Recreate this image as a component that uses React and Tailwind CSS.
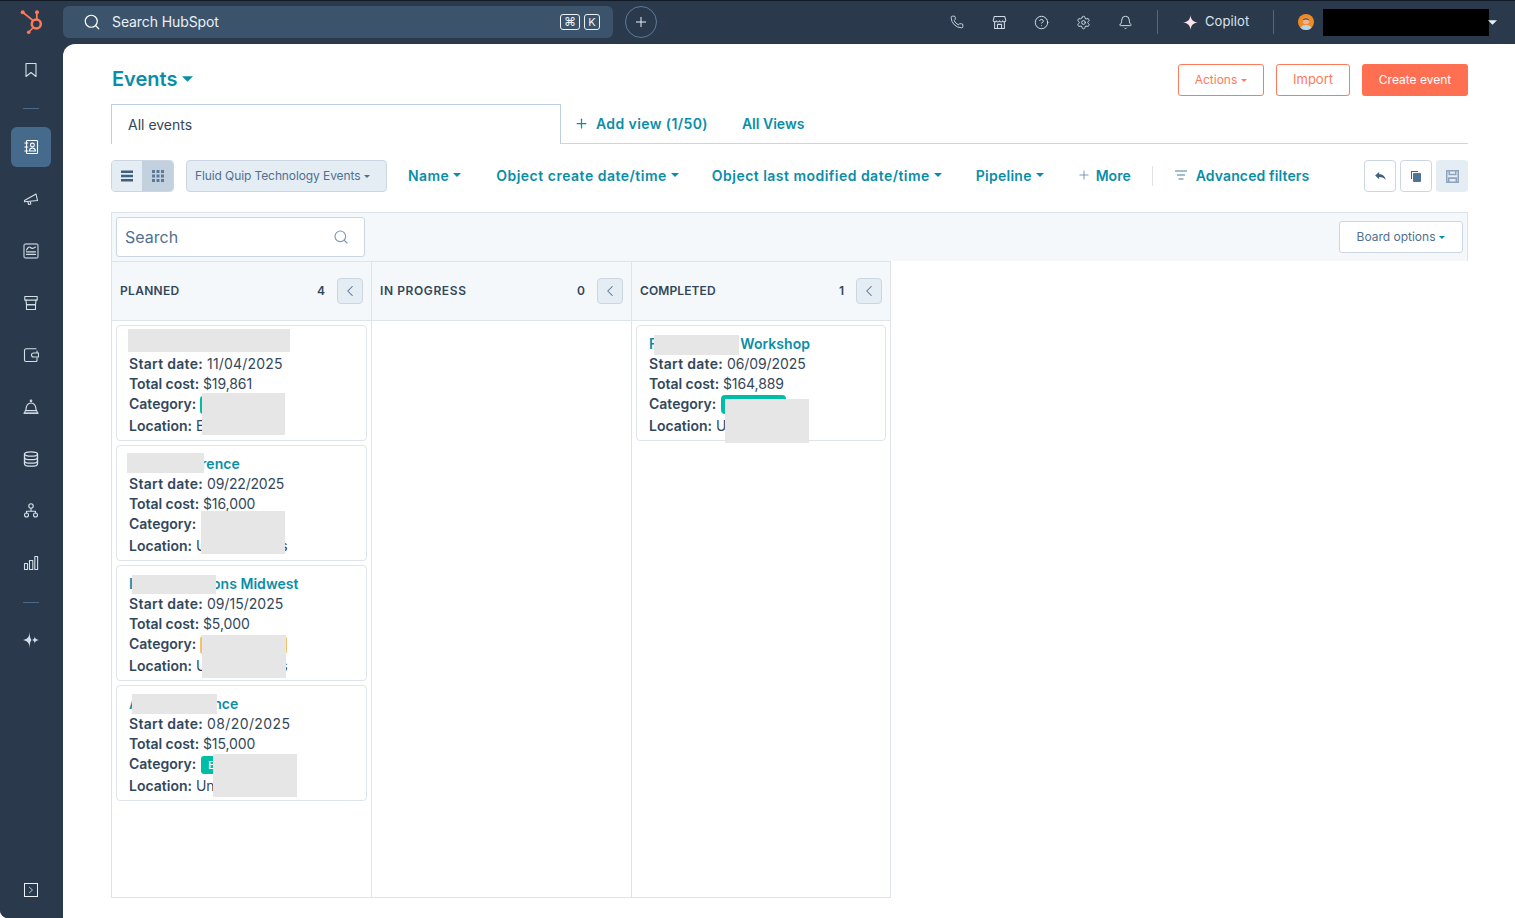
import React from "react";
import { Search, Plus, Phone, CircleHelp, Settings, Bell, ChevronLeft } from "lucide-react";

const Caret = ({ className = "" }) => (
  <svg viewBox="0 0 8 4" className={className} fill="currentColor"><path d="M0 0h8L4 4z" /></svg>
);

const S = ({ children, size = 16, className = "" }) => (
  <svg viewBox="0 0 16 16" width={size} height={size} fill="none" stroke="currentColor" strokeWidth="1.1" strokeLinejoin="round" strokeLinecap="round" className={className}>{children}</svg>
);

const Logo = () => (
  <svg viewBox="0 0 26 26" width="26" height="26" fill="none" stroke="#ff7a59" className="block">
    <circle cx="16.300" cy="15" r="4.500" strokeWidth="2.500" />
    <path d="M16.800 10V4" strokeWidth="1.800" />
    <path d="M13 11.500 3 3.500" strokeWidth="1.700" />
    <path d="M13 18.800 8.700 23.300" strokeWidth="1.600" />
    <circle cx="17" cy="3.300" r="2" fill="#ff7a59" stroke="none" />
    <circle cx="2.700" cy="3.300" r="2" fill="#ff7a59" stroke="none" />
    <circle cx="8.700" cy="23.300" r="1.800" fill="#ff7a59" stroke="none" />
  </svg>
);

const Contacts = () => (
  <S><rect x="3.500" y="1.500" width="11" height="13" rx="0.800" /><circle cx="9.400" cy="6" r="1.900" /><path d="M6.300 12c.2-2 1.400-3 3.100-3s2.900 1 3.100 3z" /><path d="M1.800 4h3M1.800 8h3M1.800 12h3" /></S>
);
const Megaphone = () => (
  <S><path d="M1.500 9.500 13 3l1.500 6.500-13 1.300z" /><path d="M5 11l.6 2.500 2.200-.5-.4-2.200" /></S>
);
const News = () => (
  <S><rect x="1" y="1" width="14" height="14" rx="1.800" strokeWidth="1.400" opacity="0.75" /><path d="M3.500 7c1.500-3 3-3.600 4-2.500 1 1 3 1 5-.5" /><path d="M3.500 8.800h9M3.500 11.300h9" strokeWidth="1.300" /></S>
);
const Store = () => (
  <S><path d="M1.800 1.500h12.400v3.600H1.800z" /><path d="M3 5.100 3.500 9.600h9L13 5.100" /><path d="M3.500 9.600h9v4.900h-9z" /></S>
);
const Wallet = () => (
  <S><path d="M13 1.800H3A1.700 1.700 0 0 0 1.500 3.500v9.500c0 .9.700 1.500 1.500 1.500h10c.6 0 1-.5 1-1v-2.500" /><path d="M14 5.500V4" /><path d="M10.500 6h5v4h-5a2 2 0 0 1 0-4z" /></S>
);
const Desk = () => (
  <S><circle cx="8" cy="1.800" r="0.800" /><path d="M2.800 11.500C3 7 5 4 8 4s5 3 5.200 7.500" /><path d="M1 14.200h14" strokeWidth="1.300" /><path d="M2.300 11.600h11.400l.8 2.600H1.500z" /></S>
);
const Database = () => (
  <S><ellipse cx="8" cy="3" rx="6.500" ry="2.200" strokeWidth="1.300" /><path d="M1.500 3v10c0 1.200 2.900 2.200 6.500 2.200s6.500-1 6.500-2.200V3" strokeWidth="1.300" /><path d="M1.500 6.500c0 1.200 2.900 2.200 6.500 2.200s6.500-1 6.500-2.200M1.500 10c0 1.200 2.900 2.200 6.500 2.200s6.500-1 6.500-2.200" strokeWidth="1.300" /></S>
);
const Network = () => (
  <S><circle cx="8" cy="3" r="2.200" /><circle cx="3.500" cy="12" r="2" /><circle cx="12.500" cy="12" r="2" /><path d="M8 5.200v3M3.500 10V8.200h9V10" /></S>
);
const Bars = () => (
  <S><path d="M1.500 8.500h3v6h-3zM6.500 5.500h3.300v9H6.500zM11.800 1.500h2.800v13h-2.800z" /></S>
);
const Spark = () => (
  <svg viewBox="0 0 16 16" width="16" height="16" fill="currentColor"><path d="M6.500 0C6.800 5 7.500 7 8.500 8 7.500 9 6.800 11 6.500 16 6.200 11 5 9 0 8c5-1 6.200-3 6.500-8z" /><path d="M11.800 4.500c.2 2 1 3 4.200 3.500-3.200.5-4 1.500-4.200 3.500-.2-2-.8-3-2.800-3.500 2-.5 2.600-1.500 2.800-3.500z" /></svg>
);

const railIcons = [<Contacts />, <Megaphone />, <News />, <Store />, <Wallet />, <Desk />, <Database />, <Network />, <Bars />];

function Rail() {
  return (
    <aside className="w-[63px] shrink-0 pr-[1px] bg-[#2a3a4c] rounded-bl-[8px] flex flex-col items-center text-[#d5dfe9]">
      <div className="h-[52px] flex items-center justify-center">
        <S><path d="M3 1.500h10v13L8 10.500l-5 4z" /></S>
      </div>
      <div className="w-[16px] h-px bg-[#4b6a8a] mt-[12px]" />
      <div className="flex flex-col items-center mt-[18px]">
        {railIcons.map((ic, i) => (
          <div key={i} className={i === 0 ? "w-[40px] h-[40px] rounded-[6px] bg-[#456a8c] flex items-center justify-center text-white" : "w-[40px] h-[40px] mt-[12px] flex items-center justify-center"}>
            {ic}
          </div>
        ))}
      </div>
      <div className="w-[16px] h-px bg-[#4b6a8a] mt-[19px]" />
      <div className="mt-[29px] h-[16px]"><Spark /></div>
      <div className="mt-auto mb-[21px]">
        <div className="w-[14px] h-[14px] border border-[#eaf0f6] flex items-center justify-center">
          <svg viewBox="0 0 8 10" width="6" height="8" fill="none" stroke="#cbd6e2" strokeWidth="1.200"><path d="M1.500 1 6 5 1.500 9" /></svg>
        </div>
      </div>
    </aside>
  );
}

function TopBar() {
  const cls = "w-[42px] flex justify-center text-[#cfdbe6]";
  return (
    <header className="h-[44px] shrink-0 bg-[#2a3a4c] border-t border-[#0f1a26] pb-[1px] flex items-center">
      <div className="w-[63px] shrink-0 pl-[20px]"><Logo /></div>
      <div className="w-[550px] h-[32px] bg-[#3b546c] rounded-[6px] flex items-center pl-[20px] pr-[13px] text-[#eaf0f6]">
        <Search size={18} strokeWidth={1.6} className="text-white" />
        <span className="ml-[11px] pb-[2px] text-[14px] text-[#eaf0f6] tracking-[-0.1px]">Search HubSpot</span>
        <span className="ml-auto w-[20px] h-[16px] border border-[#eaf0f6] rounded-[3px] flex items-center justify-center text-[12px] leading-none">⌘</span>
        <span className="ml-[4px] w-[16px] h-[16px] border border-[#eaf0f6] rounded-[3px] flex items-center justify-center text-[11px] leading-none">K</span>
      </div>
      <div className="ml-[12px] w-[32px] h-[32px] rounded-full border border-[#5b7a98] flex items-center justify-center text-[#eaf0f6]">
        <Plus size={16} strokeWidth={1.5} />
      </div>
      <div className="ml-[279px] flex items-center">
        <div className={cls}><Phone size={14} strokeWidth={1.6} /></div>
        <div className={cls}><S size={15}><path d="M2.500 1.500h11l1.200 4.300a1.700 1.700 0 0 1-3.300.4 1.800 1.800 0 0 1-3.400 0 1.800 1.800 0 0 1-3.400 0 1.700 1.700 0 0 1-3.300-.4z" /><path d="M2.800 7.500v7h10.400v-7M5.800 14.500v-4.500h4.400v4.500" /></S></div>
        <div className={cls}><CircleHelp size={15} strokeWidth={1.6} /></div>
        <div className={cls}><Settings size={15} strokeWidth={1.6} /></div>
        <div className={cls}><Bell size={15} strokeWidth={1.6} /></div>
      </div>
      <div className="ml-[11px] w-px h-[24px] bg-[#4b6a8a]" />
      <div className="ml-[25px] text-[#fbe3ee]"><svg viewBox="0 0 16 16" width="15" height="15" fill="currentColor"><path d="M8 0c.5 5 2.500 7.300 8 8-5.500.7-7.500 3-8 8-.5-5-2.500-7.300-8-8 5.500-.7 7.500-3 8-8z" /></svg></div>
      <span className="ml-[7px] text-[13px] text-[#dbe4ec] tracking-[0.1px]">Copilot</span>
      <div className="ml-[24px] w-px h-[24px] bg-[#4b6a8a]" />
      <div className="ml-[24px] w-[16px] h-[16px] rounded-full bg-[#f08a24] overflow-hidden">
        <svg viewBox="0 0 16 16" width="16" height="16"><path d="M2 16c.5-4 3-5 6-5s5.500 1 6 5z" fill="#b9d3e4" /><circle cx="8" cy="7" r="3.200" fill="#e9b796" /><path d="M4.800 6.500C5 3.500 11 3.500 11.200 6.500 10 5 6 5 4.800 6.500z" fill="#4a3426" /></svg>
      </div>
      <div className="ml-[9px] w-[166px] h-[27px] bg-black" />
      <Caret className="ml-[-1px] w-[9px] h-[5px] text-[#eaf0f6]" />
    </header>
  );
}

const Drop = ({ label, className = "" }) => (
  <button className={"flex items-center gap-[4px] pb-[2px] text-[14px] font-semibold text-[#0a8ea8] whitespace-nowrap " + className}>
    {label}<Caret className="w-[8px] h-[4px] text-[#0a8ea8]" />
  </button>
);

function Toolbar() {
  return (
    <div className="mt-[16px] h-[32px] flex items-center">
      <div className="w-[63px] h-[32px] flex rounded-[4px] border border-[#cbd6e2] overflow-hidden">
        <div className="w-[30px] bg-[#e5edf4] flex items-center justify-center">
          <svg viewBox="0 0 12 12" width="12" height="12" fill="#40607f"><path d="M0 0.500h12v2.500H0zM0 4.800h12v2.500H0zM0 9h12v2.500H0z" /></svg>
        </div>
        <div className="flex-1 bg-[#c3d1df] flex items-center justify-center">
          <svg viewBox="0 0 12 12" width="12" height="12" fill="#5b7a98"><path d="M0 0h3v3H0zM4.500 0h3v3h-3zM9 0h3v3H9zM0 4.500h3v3H0zM4.500 4.500h3v3h-3zM9 4.500h3v3H9zM0 9h3v3H0zM4.500 9h3v3h-3zM9 9h3v3H9z" /></svg>
        </div>
      </div>
      <div className="ml-[12px] w-[201px] h-[32px] rounded-[4px] border border-[#cbd6e2] bg-[#e5edf4] flex items-center pl-[8px] gap-[4px] text-[12px] tracking-[-0.1px] text-[#516f90] whitespace-nowrap">
        Fluid Quip Technology Events <Caret className="w-[6px] h-[3px] text-[#516f90]" />
      </div>
      <Drop label="Name" className="ml-[21px] tracking-[0.4px]" />
      <Drop label="Object create date/time" className="ml-[35px] tracking-[0.5px]" />
      <Drop label="Object last modified date/time" className="ml-[33px] tracking-[0.47px]" />
      <Drop label="Pipeline" className="ml-[34px] tracking-[0.25px]" />
      <div className="ml-[33px] pb-[2px] flex items-center gap-[5px] text-[14px] font-semibold text-[#0a8ea8]">
        <Plus size={14} strokeWidth={1.7} className="text-[#7c98b6]" />More
      </div>
      <div className="ml-[21px] w-px h-[20px] bg-[#dfe3eb]" />
      <div className="ml-[22px] pb-[2px] flex items-center gap-[9px] text-[14px] font-semibold tracking-[0.13px] text-[#0a8ea8]">
        <svg viewBox="0 0 12 10" width="12" height="10" fill="none" stroke="#40809f" strokeWidth="1.100"><path d="M0 1h12M2 5h8M3.500 9h5" /></svg>
        Advanced filters
      </div>
      <div className="ml-auto flex gap-[4px]">
        <div className="w-[32px] h-[32px] rounded-[4px] border border-[#cbd6e2] flex items-center justify-center">
          <svg viewBox="0 0 12 10" width="11" height="9" fill="#40607f"><path d="M4.500 0v2.500C8.500 2.500 11 4.500 12 9 10.300 6.300 8 5.500 4.500 5.500V8L0 4z" /></svg>
        </div>
        <div className="w-[32px] h-[32px] rounded-[4px] border border-[#cbd6e2] flex items-center justify-center">
          <svg viewBox="0 0 12 12" width="12" height="12"><path d="M1 1h7v1H2v7H1z" fill="#40607f" /><rect x="3" y="3" width="8" height="9" rx="1" fill="#4f7295" /></svg>
        </div>
        <div className="w-[32px] h-[32px] rounded-[4px] bg-[#e5edf4] flex items-center justify-center">
          <svg viewBox="0 0 12 12" width="13" height="13" fill="none" stroke="#8ea4bb" strokeWidth="1.400"><path d="M.7.700h10.600v10.600H.7z" /><path d="M3 .7v3.500h6V.7M2.500 11V7.500h7V11" /></svg>
        </div>
      </div>
    </div>
  );
}

const Mask = ({ className }) => <div className={"absolute z-10 bg-[#e6e6e6] " + className} />;

const L = ({ children, className = "" }) => <span className={"font-semibold " + className}>{children}</span>;

function Card({ title, date, dateTrack, cost, badge, loc, masks, w = "w-[251px]" }) {
  return (
    <div className={"relative h-[116px] rounded-[4px] border border-[#dfe3eb] bg-white pl-[12px] pt-[8px] text-[14px] leading-[20px] text-[#33475b] whitespace-nowrap " + w}>
      <div className="h-[20px] font-semibold tracking-[0.05px] text-[#0a8ea8]">{title}</div>
      <div><L className="tracking-[0.3px]">Start date:</L> <span className={dateTrack}>{date}</span></div>
      <div className="tracking-[-0.1px]"><L className="tracking-[-0.05px]">Total cost:</L> {cost}</div>
      <div className="h-[22px] flex items-start"><L>Category:</L>{badge}</div>
      <div className="flex"><L>Location:</L>&nbsp;{loc}</div>
      {masks}
    </div>
  );
}

const H = ({ name, n, track }) => (
  <div className="h-[59px] bg-[#f5f8fa] border-b border-[#dfe3eb] flex items-center pl-[8px] pr-[8px] text-[12px] font-semibold text-[#33475b]">
    <span className={track}>{name}</span>
    <span className="ml-auto">{n}</span>
    <span className="ml-[12px] w-[26px] h-[26px] rounded-[4px] border border-[#cbd6e2] bg-[#e5edf4] flex items-center justify-center text-[#516f90]"><ChevronLeft size={18} strokeWidth={1.4} /></span>
  </div>
);

function Board() {
  return (
    <div className="mt-[20px]">
      <div className="h-[49px] bg-[#f5f8fa] border border-b-0 border-[#dfe3eb] pl-[4px] pr-[4px] flex items-center justify-between">
        <div className="w-[249px] h-[40px] bg-white rounded-[3px] border border-[#cbd6e2] flex items-center justify-between pl-[8px] pr-[15px] text-[16px] text-[#516f90]">
          Search <Search size={16} strokeWidth={1.7} className="text-[#7c98b6]" />
        </div>
        <div className="w-[124px] h-[32px] bg-white rounded-[3px] border border-[#cbd6e2] flex items-center justify-center gap-[4px] text-[12px] text-[#516f90]">
          Board options <Caret className="w-[6px] h-[3px] text-[#0a8ea8]" />
        </div>
      </div>
      <div className="flex h-[637px] w-[780px] border border-[#dfe3eb]">
        <div className="w-[260px] border-r border-[#dfe3eb]">
          <H name="PLANNED" n="4" track="tracking-[0.3px]" />
          <div className="pl-[4px] pt-[4px] flex flex-col gap-[4px]">
            <Card date="11/04/2025" dateTrack="tracking-[0.2px]" cost="$19,861"
              badge={<span className="ml-[4px] mt-[2px] w-[40px] h-[18px] rounded-[3px] bg-[#00bda5]" />}
              loc="E"
              masks={<><Mask className="left-[85px] top-[67px] w-[83px] h-[42px]" /><Mask className="left-[11px] top-[3px] w-[162px] h-[23px]" /></>} />
            <Card title={<><span className="inline-block w-[72px]" />rence</>} date="09/22/2025" dateTrack="tracking-[-0.2px]" cost="$16,000"
              loc={<>U<span className="inline-block w-[74px]" />s</>}
              masks={<><Mask className="left-[10px] top-[7px] w-[77px] h-[20px]" /><Mask className="left-[84px] top-[65px] w-[84px] h-[43px]" /></>} />
            <Card title={<>I<span className="inline-block w-[79px]" />ons Midwest</>} date="09/15/2025" cost="$5,000"
              badge={<span className="ml-[4px] mt-[2px] w-[87px] h-[18px] rounded-[3px] bg-[#f5c26b]" />}
              loc={<>U<span className="inline-block w-[74px]" />s</>}
              masks={<><Mask className="left-[15px] top-[9px] w-[84px] h-[19px]" /><Mask className="left-[85px] top-[69px] w-[84px] h-[43px]" /></>} />
            <Card title={<>A<span className="inline-block w-[74px]" />nce</>} date="08/20/2025" dateTrack="tracking-[0.4px]" cost="$15,000"
              badge={<span className="ml-[5px] mt-[2px] w-[60px] h-[18px] rounded-[3px] bg-[#00bda5] pl-[7px] text-[10px] leading-[18px] font-semibold text-white">E</span>}
              loc="Un"
              masks={<><Mask className="left-[15px] top-[8px] w-[85px] h-[20px]" /><Mask className="left-[96px] top-[68px] w-[84px] h-[43px]" /></>} />
          </div>
        </div>
        <div className="w-[260px] border-r border-[#dfe3eb]">
          <H name="IN PROGRESS" n="0" track="tracking-[0.6px]" />
        </div>
        <div className="flex-1">
          <H name="COMPLETED" n="1" track="tracking-[0.1px]" />
          <div className="pl-[4px] pt-[4px]">
            <Card w="w-[250px]" title={<>F<span className="inline-block w-[83px]" />Workshop</>} date="06/09/2025" dateTrack="tracking-[-0.1px]" cost="$164,889"
              badge={<span className="ml-[5px] mt-[1px] w-[65px] h-[19px] rounded-[4px] bg-[#00bda5]" />}
              loc="U"
              masks={<><Mask className="left-[17px] top-[9px] w-[85px] h-[20px]" /><Mask className="left-[88px] top-[73px] w-[84px] h-[44px]" /></>} />
          </div>
        </div>
      </div>
    </div>
  );
}

export default function App() {
  return (
    <div className="w-[1515px] h-[918px] overflow-hidden bg-white flex flex-col font-['Inter',sans-serif]">
      <TopBar />
      <div className="flex flex-1 min-h-0 bg-[#2a3a4c] rounded-bl-[8px]">
        <Rail />
        <main className="flex-1 bg-white rounded-tl-[12px] pl-[48px] pr-[47px] pt-[20px]">
          <div className="h-[32px] flex items-center justify-between">
            <div className="ml-[1px] pb-[2px] flex items-center gap-[5px] text-[20px] font-semibold text-[#0a8ea8]">Events <Caret className="w-[11px] h-[6px]" /></div>
            <div className="flex gap-[12px] text-[12px]">
              <button className="w-[86px] h-[32px] rounded-[3px] border border-[#ff7a59] text-[#ff7a59] flex items-center justify-center gap-[4px]">Actions <Caret className="w-[6px] h-[3px]" /></button>
              <button className="w-[74px] h-[32px] rounded-[3px] border border-[#ff7a59] text-[#ff7a59] text-[13px]">Import</button>
              <button className="w-[106px] h-[32px] rounded-[3px] bg-[#ff7052] text-white">Create event</button>
            </div>
          </div>
          <div className="mt-[8px] h-[40px] border-b border-[#cbd6e2] flex items-center">
            <div className="self-start w-[450px] h-[40px] bg-white border border-b-0 border-[#bccfe0] pl-[16px] flex items-center text-[14px] text-[#33475b]">All events</div>
            <Plus size={15} strokeWidth={2} className="ml-[13px] text-[#0a8ea8]" />
            <span className="ml-[7px] text-[14px] font-semibold tracking-[0.4px] text-[#0a8ea8]">Add view (1/50)</span>
            <span className="ml-[34px] text-[14px] font-semibold text-[#0a8ea8]">All Views</span>
          </div>
          <Toolbar />
          <Board />
        </main>
      </div>
    </div>
  );
}
